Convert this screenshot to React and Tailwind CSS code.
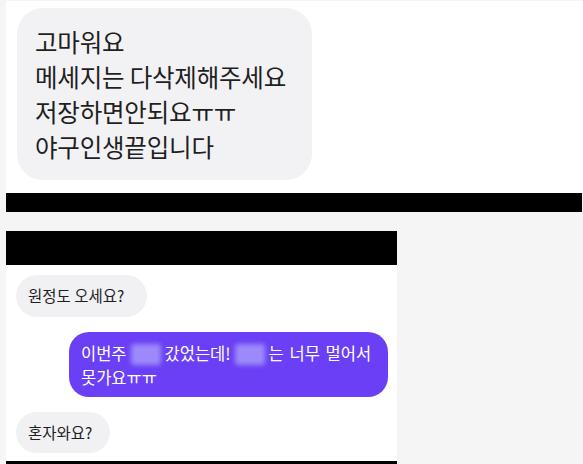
const Blurred = ({ w }) => (
  <span className="inline-block align-middle mx-[4px] -mt-[3px]">
    <span className={`block h-[21px] ${w} bg-[#9d8afa] blur-[2.5px] rounded-[3px]`} />
  </span>
);

const App = () => {
  return (
    <div className="w-[583px] h-[464px] overflow-hidden bg-[#f5f5f5] font-['Noto_Sans_CJK_KR','Noto_Sans',sans-serif] text-[#1f1f1f]">
      {/* Top message */}
      <section className="ml-[6px] mt-px h-[192px] bg-white pt-[7px] pl-[11px]">
        <div className="w-[295px] h-[172px] rounded-[26px] bg-[#f2f2f4] pl-[18px] pt-[16px] text-[24.5px] leading-[35px] tracking-[-0.2px]">
          <p>고마워요</p>
          <p>메세지는 다삭제해주세요</p>
          <p>저장하면안되요ㅠㅠ</p>
          <p>야구인생끝입니다</p>
        </div>
      </section>

      <div className="ml-[6px] w-[576px] h-[19px] bg-black" />

      {/* Chat */}
      <section className="ml-[6px] mt-[19px] w-[391px] bg-white">
        <div className="h-[34px] bg-black" />
        <div className="px-[10px] pt-[10px] pb-[8px] text-[15.5px]">
          <div className="w-[131px] h-[42px] rounded-full bg-[#f1f1f3] pl-[12px] flex items-center">
            원정도 오세요?
          </div>
          <div className="flex justify-end mt-[15px]">
            <div className="w-[319px] h-[65px] -mr-[1px] rounded-[20px] bg-[#6a3ff5] text-white pl-[12px] pt-[9px] text-[16.5px] leading-[24px] [word-spacing:2px]">
              <p className="whitespace-nowrap">
                이번주<Blurred w="w-[30px]" />갔었는데!<Blurred w="w-[30px]" />는 너무 멀어서
              </p>
              <p>못가요ㅠㅠ</p>
            </div>
          </div>
          <div className="mt-[15px] w-[94px] h-[41px] rounded-full bg-[#f1f1f3] pl-[12px] flex items-center">
            혼자와요?
          </div>
        </div>
        <div className="h-[4px] bg-black" />
      </section>
    </div>
  );
};

export default App;
